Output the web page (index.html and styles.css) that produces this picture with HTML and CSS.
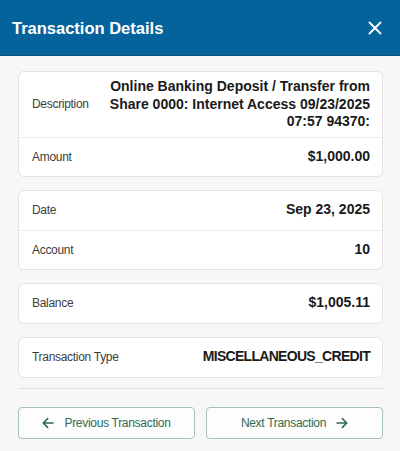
FILE: index.html
```html
<!DOCTYPE html>
<html lang="en">
<head>
<meta charset="utf-8">
<title>Transaction Details</title>
<link rel="stylesheet" href="styles.css">
</head>
<body>
<header class="header">
  <h1 class="title">Transaction Details</h1>
  <button class="close" aria-label="Close">
    <svg width="14" height="14" viewBox="0 0 14 14"><path d="M1.5 1.5 L12.5 12.5 M12.5 1.5 L1.5 12.5" stroke="#fff" stroke-width="1.8" stroke-linecap="round" fill="none"/></svg>
  </button>
</header>
<main class="content">
  <div class="cards">
    <section class="card">
      <div class="row row-tall">
        <span class="label">Description</span>
        <span class="value value-wrap">Online Banking Deposit / Transfer from Share 0000: Internet Access 09/23/2025 07:57 94370:</span>
      </div>
      <div class="row">
        <span class="label">Amount</span>
        <span class="value">$1,000.00</span>
      </div>
    </section>
    <section class="card">
      <div class="row">
        <span class="label">Date</span>
        <span class="value">Sep 23, 2025</span>
      </div>
      <div class="row">
        <span class="label">Account</span>
        <span class="value">10</span>
      </div>
    </section>
    <section class="card">
      <div class="row">
        <span class="label">Balance</span>
        <span class="value">$1,005.11</span>
      </div>
    </section>
    <section class="card">
      <div class="row">
        <span class="label">Transaction Type</span>
        <span class="value value-caps">MISCELLANEOUS_CREDIT</span>
      </div>
    </section>
  </div>
  <div class="divider"></div>
  <nav class="footer">
    <button class="nav-btn">
      <svg width="12" height="12" viewBox="0 0 12 12"><path d="M11 6 H1.2 M5.6 1.6 L1.2 6 L5.6 10.4" stroke="#2f6b51" stroke-width="1.6" fill="none" stroke-linecap="round" stroke-linejoin="round"/></svg>
      <span>Previous Transaction</span>
    </button>
    <button class="nav-btn">
      <span>Next Transaction</span>
      <svg width="12" height="12" viewBox="0 0 12 12"><path d="M1 6 H10.8 M6.4 1.6 L10.8 6 L6.4 10.4" stroke="#2f6b51" stroke-width="1.6" fill="none" stroke-linecap="round" stroke-linejoin="round"/></svg>
    </button>
  </nav>
</main>
</body>
</html>
```

FILE: styles.css
```css
* { box-sizing: border-box; }

html, body {
  margin: 0;
  padding: 0;
}

body {
  background: #f7f7f7;
  font-family: "Liberation Sans", Arial, sans-serif;
  color: #222;
  width: 400px;
  min-height: 451px;
}

.header {
  height: 56px;
  background: #05639c;
  border-bottom: 1px solid #034f7d;
  display: flex;
  align-items: center;
  justify-content: space-between;
  padding: 0 18px 0 12px;
}

.title {
  margin: 0;
  color: #fff;
  font-size: 16.5px;
  font-weight: bold;
  line-height: 20px;
}

.close {
  background: none;
  border: 0;
  padding: 0;
  width: 14px;
  height: 14px;
  display: flex;
  cursor: pointer;
}

.content {
  padding: 15px 17px 0 18px;
}

.cards {
  display: flex;
  flex-direction: column;
  gap: 13px;
}

.card {
  background: #fff;
  border: 1px solid #e3e3e3;
  border-radius: 6px;
}

.row {
  display: flex;
  align-items: center;
  justify-content: space-between;
  min-height: 39px;
  padding: 0 12px 0 13px;
  gap: 16px;
}

.row + .row {
  border-top: 1px solid #ebebeb;
}

.row-tall {
  padding-top: 6px;
  padding-bottom: 6px;
}

.label {
  font-size: 12px;
  letter-spacing: -0.3px;
  color: #3d3d3d;
  white-space: nowrap;
}

.value {
  font-size: 14px;
  font-weight: bold;
  color: #1a1a1a;
  text-align: right;
  line-height: 17.5px;
}

.value-wrap {
  max-width: 265px;
}

.value-caps {
  letter-spacing: -0.7px;
}

.divider {
  height: 1px;
  background: #e2e2e2;
  margin-top: 10px;
}

.footer {
  display: flex;
  gap: 11px;
  margin-top: 18px;
}

.nav-btn {
  flex: 1;
  height: 32px;
  background: #fdfdfd;
  border: 1px solid #a9c1b5;
  border-radius: 4px;
  display: flex;
  align-items: center;
  justify-content: center;
  gap: 10px;
  font-family: "Liberation Sans", Arial, sans-serif;
  font-size: 12px;
  letter-spacing: -0.3px;
  color: #2f6b51;
  padding: 0;
  cursor: pointer;
}

.nav-btn svg {
  flex: none;
}
```
